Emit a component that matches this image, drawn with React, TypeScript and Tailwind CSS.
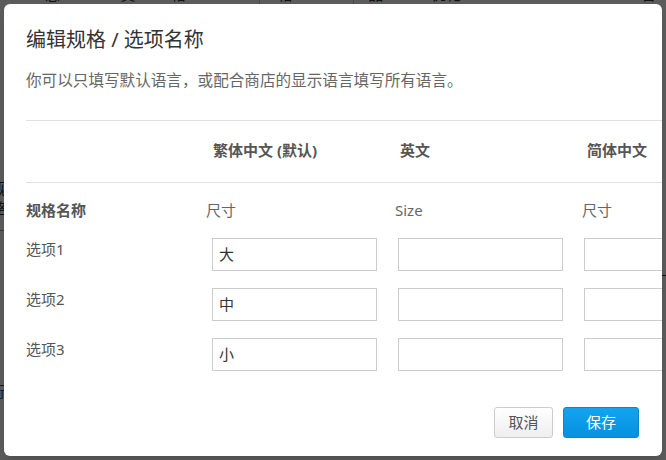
import React from "react";

const font = { fontFamily: '"Noto Sans", "Noto Sans CJK SC", sans-serif' };

function Cell({ value }: { value: string }) {
  return (
    <div className="w-[165px] h-[33px] border border-[#cccccc] bg-white flex items-center pl-[6px] text-[15px] text-[#333]">
      {value}
    </div>
  );
}

export default function App() {
  const rows = [
    { label: "选项1", v: "大" },
    { label: "选项2", v: "中" },
    { label: "选项3", v: "小" },
  ];
  return (
    <div className="relative w-[666px] h-[460px] overflow-hidden bg-white" style={font}>
      {/* background page */}
      <div className="absolute inset-0">
        <div className="flex items-end h-[12px] -mt-[7px] text-[15px] text-[#333] gap-[26px] pl-[45px]">
          <span>商品信息</span>
          <span>分类</span>
          <span>数量和价格</span>
          <span className="border-l border-[#ccc] pl-[18px]">商品规格</span>
          <span className="border-l border-[#ccc] pl-[14px]">加购品</span>
          <span>搜索引擎优化</span>
          <span className="ml-[110px]">语言</span>
        </div>
        <div className="absolute left-[-8px] top-[178px] text-[15px] text-[#333] leading-[20px]">
          <div>规</div>
          <div>格</div>
        </div>
        <div className="absolute left-0 top-[230px] w-[10px] border-t border-[#999]" />
        <div className="absolute left-[-8px] top-[380px] text-[15px] text-[#1a5fa0]">标</div>
        <div className="absolute right-0 top-[275px] w-[10px] border-t border-[#333]" />
      </div>
      {/* overlay */}
      <div className="absolute inset-0 bg-black/[0.64] p-[4px] flex">
        <div className="flex-1 bg-white rounded-[6px] shadow-lg flex flex-col overflow-hidden">
          <div className="pl-[22px] pt-[22px]">
            <div className="text-[20px] leading-[28px] text-[#333]">编辑规格 / 选项名称</div>
            <div className="mt-[15px] text-[15.6px] leading-[22px] text-[#666]">
              你可以只填写默认语言，或配合商店的显示语言填写所有语言。
            </div>
          </div>
          <div className="pl-[22px] mt-[29px] overflow-hidden">
            <div className="w-[744px] border-t border-[#e0e0e0]">
              <div className="grid grid-cols-[186px_186px_186px_186px] h-[62px] items-center border-b border-[#e0e0e0] text-[15px] font-bold text-[#555]">
                <div />
                <div className="pl-[1px] pb-[3px]">繁体中文 (默认)</div>
                <div className="pl-[2px] pb-[3px]">英文</div>
                <div className="pl-[3px] pb-[3px]">简体中文</div>
              </div>
              <div className="grid grid-cols-[186px_186px_186px_186px] pt-[16px] leading-[22px] text-[15px] text-[#666]">
                <div className="font-bold text-[#555]">规格名称</div>
                <div className="-ml-[6px]">尺寸</div>
                <div className="-ml-[3px]">Size</div>
                <div className="-ml-[2px]">尺寸</div>
              </div>
              <div className="flex flex-col gap-[17px] mt-[17px]">
                {rows.map((r) => (
                  <div key={r.label} className="grid grid-cols-[186px_186px_186px_186px] items-start">
                    <div className="text-[15px] leading-[22px] text-[#555]">{r.label}</div>
                    <Cell value={r.v} />
                    <Cell value="" />
                    <Cell value="" />
                  </div>
                ))}
              </div>
            </div>
          </div>
          <div className="flex-1" />
          <div className="flex justify-end gap-[10px] pr-[23px] pb-[18px]">
            <button className="w-[59px] h-[31px] rounded-[3px] border border-[#cccccc] bg-gradient-to-b from-[#ffffff] to-[#eeeeee] text-[15px] text-[#555]">
              取消
            </button>
            <button className="w-[76px] h-[31px] rounded-[3px] border border-[#0a86cc] bg-gradient-to-b from-[#12a4f0] to-[#0591e0] text-[15px] text-white">
              保存
            </button>
          </div>
        </div>
      </div>
    </div>
  );
}
